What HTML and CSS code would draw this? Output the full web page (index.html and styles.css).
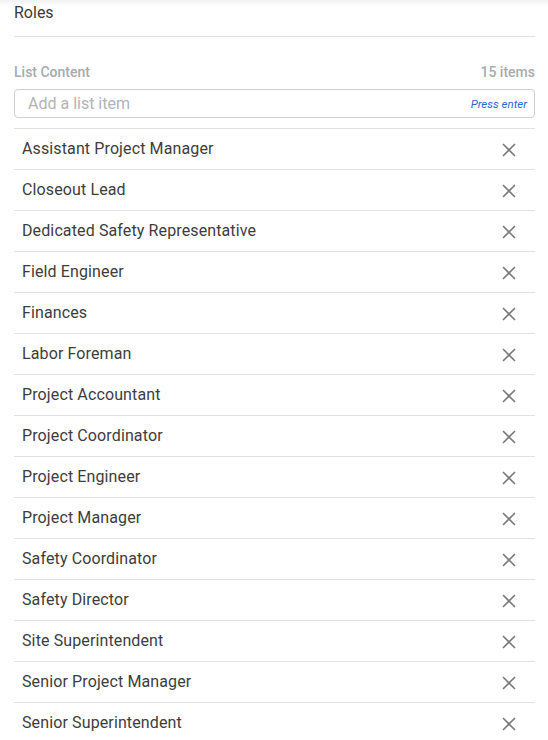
FILE: index.html
```html
<!DOCTYPE html>
<html>
<head>
<meta charset="utf-8">
<link rel="stylesheet" href="styles.css">
</head>
<body>
<div class="topshade"></div>
<div class="panel">
  <div class="title">Roles</div>
  <div class="section-head">
    <span class="label">List Content</span>
    <span class="count">15 items</span>
  </div>
  <div class="input">
    <span class="placeholder">Add a list item</span>
    <span class="hint">Press enter</span>
  </div>
  <ul class="list">
    <li><span>Assistant Project Manager</span><svg class="x" viewBox="0 0 16 16"><path d="M2 2L14 14M14 2L2 14"/></svg></li>
    <li><span>Closeout Lead</span><svg class="x" viewBox="0 0 16 16"><path d="M2 2L14 14M14 2L2 14"/></svg></li>
    <li><span>Dedicated Safety Representative</span><svg class="x" viewBox="0 0 16 16"><path d="M2 2L14 14M14 2L2 14"/></svg></li>
    <li><span>Field Engineer</span><svg class="x" viewBox="0 0 16 16"><path d="M2 2L14 14M14 2L2 14"/></svg></li>
    <li><span>Finances</span><svg class="x" viewBox="0 0 16 16"><path d="M2 2L14 14M14 2L2 14"/></svg></li>
    <li><span>Labor Foreman</span><svg class="x" viewBox="0 0 16 16"><path d="M2 2L14 14M14 2L2 14"/></svg></li>
    <li><span>Project Accountant</span><svg class="x" viewBox="0 0 16 16"><path d="M2 2L14 14M14 2L2 14"/></svg></li>
    <li><span>Project Coordinator</span><svg class="x" viewBox="0 0 16 16"><path d="M2 2L14 14M14 2L2 14"/></svg></li>
    <li><span>Project Engineer</span><svg class="x" viewBox="0 0 16 16"><path d="M2 2L14 14M14 2L2 14"/></svg></li>
    <li><span>Project Manager</span><svg class="x" viewBox="0 0 16 16"><path d="M2 2L14 14M14 2L2 14"/></svg></li>
    <li><span>Safety Coordinator</span><svg class="x" viewBox="0 0 16 16"><path d="M2 2L14 14M14 2L2 14"/></svg></li>
    <li><span>Safety Director</span><svg class="x" viewBox="0 0 16 16"><path d="M2 2L14 14M14 2L2 14"/></svg></li>
    <li><span>Site Superintendent</span><svg class="x" viewBox="0 0 16 16"><path d="M2 2L14 14M14 2L2 14"/></svg></li>
    <li><span>Senior Project Manager</span><svg class="x" viewBox="0 0 16 16"><path d="M2 2L14 14M14 2L2 14"/></svg></li>
    <li><span>Senior Superintendent</span><svg class="x" viewBox="0 0 16 16"><path d="M2 2L14 14M14 2L2 14"/></svg></li>
  </ul>
</div>
</body>
</html>
```
FILE: styles.css
```css
html, body {
  margin: 0;
  padding: 0;
  background: #fff;
  font-family: Roboto, "Liberation Sans", Arial, sans-serif;
}
.topshade {
  position: fixed;
  top: 0;
  left: 0;
  right: 0;
  height: 6px;
  background: linear-gradient(to bottom, rgba(0,0,0,0.05), rgba(0,0,0,0));
  pointer-events: none;
}
.panel {
  padding: 0 13px 0 14px;
}
.title {
  font-size: 16px;
  color: #3a3a3a;
  line-height: 26px;
  height: 26px;
  padding-bottom: 10px;
  border-bottom: 1px solid #e2e2e2;
}
.section-head {
  display: flex;
  justify-content: space-between;
  align-items: center;
  margin-top: 26px;
  height: 17px;
  font-size: 14px;
  font-weight: 500;
  color: #a7abaf;
}
.input {
  margin-top: 9px;
  height: 27px;
  border: 1px solid #cfcfcf;
  border-radius: 4px;
  display: flex;
  align-items: center;
  justify-content: space-between;
  padding: 0 7px 0 13px;
}
.placeholder {
  font-size: 16px;
  color: #b3b3b3;
}
.hint {
  font-size: 11.5px;
  font-style: italic;
  color: #2c66d6;
}
.list {
  list-style: none;
  margin: 10px 0 0;
  padding: 0;
  border-top: 1px solid #e2e2e2;
}
.list li {
  height: 38px;
  padding: 0 18px 2px 8px;
  border-bottom: 1px solid #e2e2e2;
  display: flex;
  align-items: center;
  justify-content: space-between;
  font-size: 16px;
  letter-spacing: 0.12px;
  color: #3d3d3d;
}
.x {
  width: 16px;
  height: 16px;
  margin-top: 4px;
  fill: none;
  stroke: #7a7a7a;
  stroke-width: 1.6;
}
```
